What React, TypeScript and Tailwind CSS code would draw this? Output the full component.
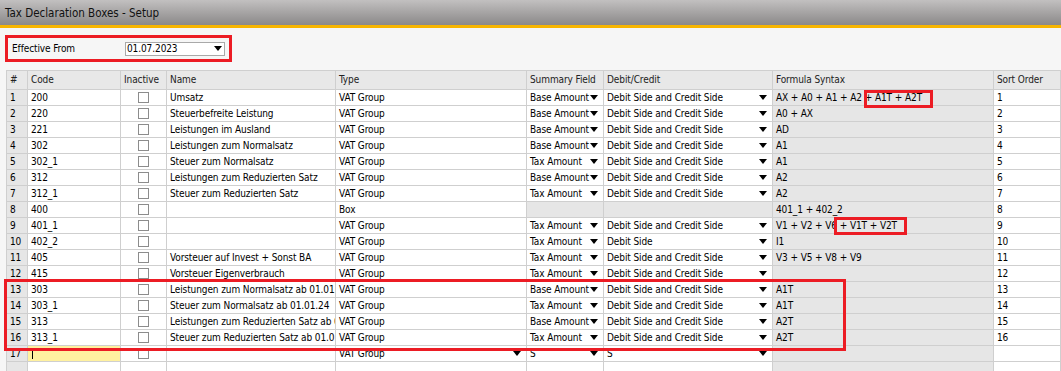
import React from "react";

type Row = {
  n: number;
  code: string;
  name: string;
  type: string;
  summary: string;
  debit: string;
  formula: string;
  sort: string;
  box?: boolean;
};

const DS = "Debit Side and Credit Side";

const rows: Row[] = [
  { n: 1, code: "200", name: "Umsatz", type: "VAT Group", summary: "Base Amount", debit: DS, formula: "AX + A0 + A1 + A2 + A1T + A2T", sort: "1" },
  { n: 2, code: "220", name: "Steuerbefreite Leistung", type: "VAT Group", summary: "Base Amount", debit: DS, formula: "A0 + AX", sort: "2" },
  { n: 3, code: "221", name: "Leistungen im Ausland", type: "VAT Group", summary: "Base Amount", debit: DS, formula: "AD", sort: "3" },
  { n: 4, code: "302", name: "Leistungen zum Normalsatz", type: "VAT Group", summary: "Base Amount", debit: DS, formula: "A1", sort: "4" },
  { n: 5, code: "302_1", name: "Steuer zum Normalsatz", type: "VAT Group", summary: "Tax Amount", debit: DS, formula: "A1", sort: "5" },
  { n: 6, code: "312", name: "Leistungen zum Reduzierten Satz", type: "VAT Group", summary: "Base Amount", debit: DS, formula: "A2", sort: "6" },
  { n: 7, code: "312_1", name: "Steuer zum Reduzierten Satz", type: "VAT Group", summary: "Tax Amount", debit: DS, formula: "A2", sort: "7" },
  { n: 8, code: "400", name: "", type: "Box", summary: "", debit: "", formula: "401_1 + 402_2", sort: "8", box: true },
  { n: 9, code: "401_1", name: "", type: "VAT Group", summary: "Tax Amount", debit: DS, formula: "V1 + V2 + V6 + V1T + V2T", sort: "9" },
  { n: 10, code: "402_2", name: "", type: "VAT Group", summary: "Tax Amount", debit: "Debit Side", formula: "I1", sort: "10" },
  { n: 11, code: "405", name: "Vorsteuer auf Invest + Sonst BA", type: "VAT Group", summary: "Tax Amount", debit: DS, formula: "V3 + V5 + V8 + V9", sort: "11" },
  { n: 12, code: "415", name: "Vorsteuer Eigenverbrauch", type: "VAT Group", summary: "Tax Amount", debit: DS, formula: "", sort: "12" },
  { n: 13, code: "303", name: "Leistungen zum Normalsatz ab 01.01.24", type: "VAT Group", summary: "Base Amount", debit: DS, formula: "A1T", sort: "13" },
  { n: 14, code: "303_1", name: "Steuer zum Normalsatz ab 01.01.24", type: "VAT Group", summary: "Tax Amount", debit: DS, formula: "A1T", sort: "14" },
  { n: 15, code: "313", name: "Leistungen zum Reduzierten Satz ab 01.01.24", type: "VAT Group", summary: "Base Amount", debit: DS, formula: "A2T", sort: "15" },
  { n: 16, code: "313_1", name: "Steuer zum Reduzierten Satz ab 01.01.24", type: "VAT Group", summary: "Tax Amount", debit: DS, formula: "A2T", sort: "16" },
];

const cols = "grid grid-cols-[21px_93px_46px_169px_191px_77px_169px_221px_1fr]";
const cell = "h-4 border-r border-b border-[#cfcfcf] px-[3px] leading-[15px] whitespace-nowrap overflow-hidden";

function Arrow() {
  return <span className="ml-auto mr-[2px] h-0 w-0 shrink-0 border-x-[4px] border-t-[5px] border-x-transparent border-t-black" />;
}

function Check() {
  return <div className="mx-auto mt-[2px] h-[11px] w-[11px] border border-[#8c8c8c] bg-white" />;
}

export default function App() {
  return (
    <div
      className="relative h-[371px] w-[1061px] overflow-hidden bg-[#f6f6f6] text-[10px] tracking-[-0.1px] text-black"
      style={{ fontFamily: "'DejaVu Sans Condensed', 'Liberation Sans', Arial, sans-serif", fontStretch: "condensed" }}
    >
      <div className="flex h-[25px] items-center bg-gradient-to-b from-[#c2c0c0] to-[#8b8989] pl-[5px] pt-[2px] text-[11.5px] tracking-normal text-[#111]">
        Tax Declaration Boxes - Setup
      </div>
      <div className="h-[3px] bg-[#f7b500]" />

      <div className="ml-[5px] mt-[7px] flex h-[27px] w-[227px] items-center border-[3px] border-[#ec1c24] pl-[4px]">
        <span className="w-[113px]">Effective From</span>
        <div className="flex h-[14px] w-[100px] items-center border border-[#a9a9a9] bg-white pl-[1px] leading-[12px]">
          01.07.2023
          <Arrow />
        </div>
      </div>

      <div className={`${cols} ml-[6px] mt-[8px] border-l border-t border-[#cfcfcf] bg-white`}>
        {["#", "Code", "Inactive", "Name", "Type", "Summary Field", "Debit/Credit", "Formula Syntax", "Sort Order"].map((h) => (
          <div key={h} className={`${cell} h-[19px] bg-[#e8e8e8] leading-[17px] text-[#222]`}>
            {h}
          </div>
        ))}

        {rows.map((r) => (
          <React.Fragment key={r.n}>
            <div className={`${cell} bg-[#e6e6e6]`}>{r.n}</div>
            <div className={cell}>{r.code}</div>
            <div className={cell}><Check /></div>
            <div className={cell}>{r.name}</div>
            <div className={cell}>{r.type}</div>
            {r.box ? (
              <>
                <div className={`${cell} bg-[#e6e6e6]`} />
                <div className={`${cell} bg-[#e6e6e6]`} />
              </>
            ) : (
              <>
                <div className={`${cell} flex items-center`}>
                  {r.summary}
                  <Arrow />
                </div>
                <div className={`${cell} flex items-center`}>
                  {r.debit}
                  <Arrow />
                </div>
              </>
            )}
            <div className={`${cell} bg-[#e6e6e6]`}>{r.formula}</div>
            <div className={cell}>{r.sort}</div>
          </React.Fragment>
        ))}

        <div className={`${cell} bg-[#e6e6e6]`}>17</div>
        <div className={`${cell} flex items-center bg-[#fff1a0]`}>
          <span className="ml-[1px] h-[11px] w-px bg-black" />
        </div>
        <div className={cell}><Check /></div>
        <div className={cell} />
        <div className={`${cell} flex items-center`}>VAT Group<Arrow /></div>
        <div className={`${cell} flex items-center`}>S<Arrow /></div>
        <div className={`${cell} flex items-center`}>S<Arrow /></div>
        <div className={`${cell} bg-[#e6e6e6]`} />
        <div className={cell} />

        <div className={`${cell} bg-[#e6e6e6]`} />
        <div className={cell} />
        <div className={cell} />
        <div className={cell} />
        <div className={cell} />
        <div className={cell} />
        <div className={cell} />
        <div className={`${cell} bg-[#e6e6e6]`} />
        <div className={cell} />
      </div>

      <div className="absolute left-[864px] top-[90px] h-[18px] w-[69px] border-[3px] border-[#ec1c24]" />
      <div className="absolute left-[834px] top-[217px] h-[18px] w-[73px] border-[3px] border-[#ec1c24]" />
      <div className="absolute left-[4px] top-[279px] h-[72px] w-[842px] border-[3px] border-[#ec1c24]" />
    </div>
  );
}
